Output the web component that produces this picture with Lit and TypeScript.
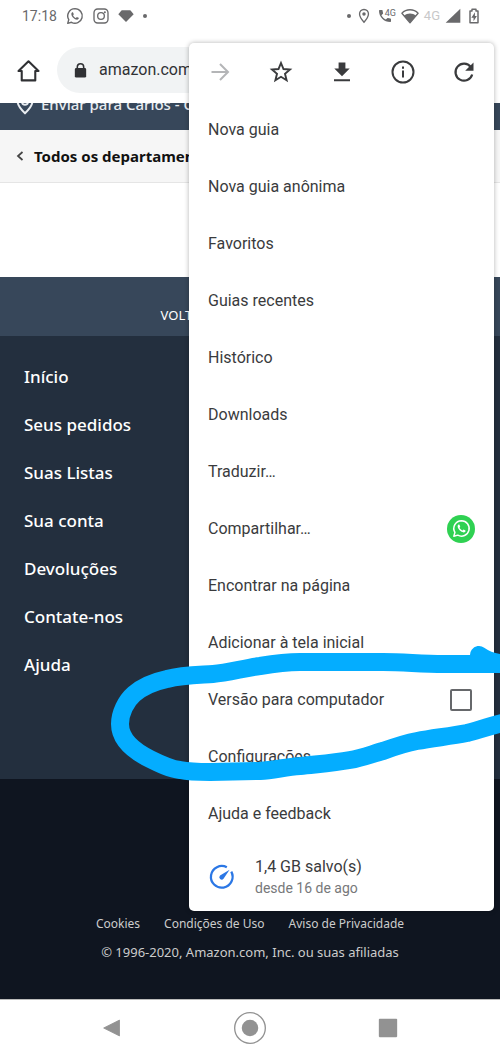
import { LitElement, html, css, svg } from "lit";
import { customElement, property } from "lit/decorators.js";

const bubble = svg`<path d="M12 2.2a9.7 9.7 0 0 0-8.3 14.7L2.3 21.8l5-1.4A9.7 9.7 0 1 0 12 2.2z" fill="none" stroke="currentColor" stroke-width="1.9" stroke-linejoin="round"/><path d="M8.6 6.9c-.4 0-1.5.8-1.5 2.4 0 3.300 4.300 7.600 7.600 7.600 1.500 0 2.400-1 2.500-2.100 0-.4-2.400-1.600-2.700-1.500-.4.100-.9 1.400-1.300 1.300-1.400-.4-3.200-2.100-3.700-3.400-.1-.4 1-1 .9-1.500-.1-.5-1-2.800-1.300-2.800z" fill="currentColor"/>`;

const icons = {
  whatsapp: bubble,
  instagram: svg`<g fill="none" stroke="currentColor" stroke-width="2"><rect x="1.500" y="1.500" width="21" height="21" rx="5.500"/><circle cx="12" cy="12" r="5"/></g><circle cx="17.800" cy="6.200" r="1.500" fill="currentColor"/>`,
  gem: svg`<path d="M5.500 3.500h13L23.500 9.500 12 21 .5 9.500z" fill="currentColor"/>`,
  place: svg`<path d="M12 2.200c-4 0-6.700 3-6.700 6.800 0 4.800 6.700 12.300 6.700 12.300S18.700 13.800 18.700 9c0-3.800-2.700-6.800-6.700-6.800z" fill="none" stroke="currentColor" stroke-width="2"/><circle cx="12" cy="9" r="2.600" fill="currentColor"/>`,
  call: svg`<path d="M6.600 10.800c1.400 2.800 3.800 5.100 6.600 6.600l2.200-2.200c.3-.3.700-.4 1-.2 1.100.4 2.300.6 3.600.6.600 0 1 .4 1 1V20c0 .6-.4 1-1 1C10.600 21 3 13.400 3 4c0-.6.400-1 1-1h3.500c.6 0 1 .4 1 1 0 1.300.2 2.500.6 3.600.1.300 0 .7-.2 1z" fill="currentColor"/>`,
  wifi: svg`<path d="M1.200 8.300C7 2.200 17 2.200 22.800 8.300L12 21z" fill="none" stroke="currentColor" stroke-width="1.800" stroke-linejoin="round"/><path d="M4 11.500c4.500-4 11.500-4 16 0L12 20.500z" fill="currentColor"/>`,
  signal: svg`<path d="M23 1v21H1z" fill="currentColor"/>`,
  battery: svg`<path d="M9 2h6v2.500h3V22H6V4.500h3z" fill="none" stroke="currentColor" stroke-width="2.200" stroke-linejoin="round"/><path d="M13.500 6.500 8 14.500h3.300V20l5-8h-3z" fill="currentColor"/>`,
  home: svg`<path d="M12 3.200 2.400 12.500H5.500v9h13v-9h3.100z" fill="none" stroke="currentColor" stroke-width="2" stroke-linejoin="round"/>`,
  lock: svg`<path d="M7.500 9V7a4.500 4.500 0 0 1 9 0v2" fill="none" stroke="currentColor" stroke-width="2.200"/><rect x="4" y="8.500" width="16" height="13.500" rx="2" fill="currentColor"/>`,
  pin: svg`<path d="M12 2C7.500 2 4 5.300 4 9.500 4 14.500 12 22 12 22s8-7.500 8-12.500C20 5.300 16.500 2 12 2z" fill="none" stroke="currentColor" stroke-width="2.200"/><circle cx="12" cy="9.500" r="3.300" fill="none" stroke="currentColor" stroke-width="2"/>`,
  chevron: svg`<path d="M17 4 8 12l9 8" fill="none" stroke="currentColor" stroke-width="3.500"/>`,
  forward: svg`<path d="M3.500 12h16M12 4l8 8-8 8" fill="none" stroke="currentColor" stroke-width="2"/>`,
  star: svg`<path d="m12 3 2.500 6 6.500.6-5 4.200 1.600 6.400L12 16.800l-5.600 3.400L8 13.800 3 9.600 9.500 9z" fill="none" stroke="currentColor" stroke-width="1.900"/>`,
  download: svg`<path d="M8.600 2.500h6.800v6h4.300L12 16.200 4.300 8.500h4.300zM4 19.300h16v2H4z" fill="currentColor"/>`,
  info: svg`<circle cx="12" cy="12" r="10.500" fill="none" stroke="currentColor" stroke-width="2"/><path d="M11 10.500h2V17.500h-2zM11 6.500h2v2.200h-2z" fill="currentColor"/>`,
  reload: svg`<path d="M18.800 7A8.500 8.500 0 1 0 20.200 14.500" fill="none" stroke="currentColor" stroke-width="2.200"/><path d="M21.500 2.500v8.300h-8.300z" fill="currentColor"/>`,
  saver: svg`<path d="M15.500 2.600A10 10 0 1 0 20 6.200" transform="rotate(6 12 12)" fill="none" stroke="currentColor" stroke-width="2.100"/><path d="M19 5.200 10.200 10.600a2.200 2.200 0 1 0 3.200 3.100z" fill="currentColor"/>`,
  back: svg`<path d="M21 2.500v19L2 12z" fill="currentColor" stroke="currentColor" stroke-linejoin="round"/>`,
  circle: svg`<circle cx="12" cy="12" r="11.500" fill="none" stroke="currentColor" stroke-width="1"/><circle cx="12" cy="12" r="6.200" fill="currentColor"/>`,
  square: svg`<rect x="1" y="1" width="22" height="22" rx="1" fill="currentColor"/>`,
};

@customElement("ui-icon")
class UiIcon extends LitElement {
  @property() name: keyof typeof icons = "home";

  static styles = css`
    :host { display: inline-flex; flex: none; width: 24px; height: 24px; }
    .glyph { width: 100%; height: 100%; overflow: visible; }
  `;

  render() {
    return html`<svg class="glyph" viewBox="0 0 24 24" aria-hidden="true">${icons[this.name]}</svg>`;
  }
}

@customElement("browser-menu")
class BrowserMenu extends LitElement {
  static styles = css`
    :host {
      display: block;
      font-family: Roboto, sans-serif;
      color: #3a3b3d;
      background: #fff;
      border-radius: 5px;
      box-shadow: 0 0 5px rgba(0, 0, 0, 0.3);
    }
    button { font: inherit; color: inherit; background: none; border: 0; padding: 0; text-align: left; }
    .actions { display: grid; grid-template-columns: repeat(5, 1fr); height: 58px; }
    .action { display: flex; align-items: center; justify-content: center; }
    .action:disabled { color: #b4b5b7; }
    .list { list-style: none; margin: 0; padding: 0; }
    .row {
      display: flex; align-items: center; justify-content: space-between;
      box-sizing: border-box; width: 100%; height: 57px; padding: 0 19px;
      font-size: 16px; line-height: 20px;
    }
    .share {
      display: flex; align-items: center; justify-content: center;
      width: 28px; height: 28px; border-radius: 50%; background: #2fd152; color: #fff;
    }
    .share ui-icon { width: 19px; height: 19px; }
    .box {
      appearance: none; box-sizing: border-box; width: 22px; height: 22px; margin: 0 3px;
      border: 2px solid #66686b; border-radius: 2px;
    }
    .saved { display: flex; align-items: center; gap: 20px; width: 100%; height: 69px; padding: 0 20px; }
    .saved ui-icon { width: 26px; height: 26px; color: #2b77e5; }
    .texts { display: flex; flex-direction: column; }
    .amount { font-size: 16px; line-height: 22px; }
    .since { font-size: 14px; line-height: 20px; color: #77787a; }
  `;

  private action(name: string, label: string, off = false) {
    return html`<button class="action" aria-label=${label} ?disabled=${off}><ui-icon name=${name}></ui-icon></button>`;
  }

  private item(label: string) {
    if (label === "Versão para computador") {
      return html`<li><label class="row">${label}<input class="box" type="checkbox" /></label></li>`;
    }
    return html`<li><button class="row"><span>${label}</span>${label === "Compartilhar…"
      ? html`<span class="share"><ui-icon name="whatsapp"></ui-icon></span>` : ""}</button></li>`;
  }

  render() {
    const labels = ["Nova guia", "Nova guia anônima", "Favoritos", "Guias recentes", "Histórico", "Downloads",
      "Traduzir…", "Compartilhar…", "Encontrar na página", "Adicionar à tela inicial",
      "Versão para computador", "Configurações", "Ajuda e feedback"];
    return html`
      <div class="actions">
        ${this.action("forward", "Avançar", true)}
        ${this.action("star", "Adicionar aos favoritos")}
        ${this.action("download", "Baixar")}
        ${this.action("info", "Informações")}
        ${this.action("reload", "Recarregar")}
      </div>
      <ul class="list">${labels.map((l) => this.item(l))}</ul>
      <button class="saved">
        <ui-icon name="saver"></ui-icon>
        <span class="texts"><span class="amount">1,4 GB salvo(s)</span><span class="since">desde 16 de ago</span></span>
      </button>
    `;
  }
}

@customElement("app-root")
class AppRoot extends LitElement {
  static styles = css`
    :host {
      display: block; position: relative; overflow: hidden; background: #fff;
      font-family: "Noto Sans", sans-serif; white-space: nowrap;
    }
    a { color: inherit; text-decoration: none; }
    button { font: inherit; color: inherit; background: none; border: 0; padding: 0; }
    .status {
      display: flex; align-items: center; justify-content: space-between;
      box-sizing: border-box; height: 32px; padding: 0 18px 0 22px;
      font: 14px/20px Roboto, sans-serif; color: #69696b;
    }
    .group { display: flex; align-items: center; gap: 9px; }
    .right { gap: 5px; }
    .dot { width: 4px; height: 4px; border-radius: 50%; background: currentColor; }
    .status ui-icon { width: 16px; height: 16px; }
    .status .app { width: 18px; height: 18px; }
    .voice { display: flex; align-items: flex-start; font-size: 9px; line-height: 10px; }
    .voice span { margin-left: -8px; }
    .faint { font-size: 13px; line-height: 26px; color: #c8c8c9; align-self: flex-start; }
    .toolbar {
      display: flex; align-items: center; gap: 16px;
      box-sizing: border-box; height: 71px; padding: 5px 16px 0; color: #303134;
    }
    .toolbar .home { display: flex; }
    .home ui-icon { width: 25px; height: 25px; }
    .address {
      display: flex; align-items: center; gap: 10px; flex: 1; min-width: 0;
      height: 46px; padding: 0 15px; border-radius: 23px; background: #f1f3f4;
    }
    .address ui-icon { width: 17px; height: 17px; }
    .url {
      flex: 1; min-width: 0; border: 0; padding: 0; background: none;
      font: 16px/20px Roboto, sans-serif; color: #303134;
    }
    .page { overflow: hidden; }
    .deliver {
      display: flex; align-items: center; gap: 5px; height: 52px; margin-top: -25px;
      padding: 0 14px; background: #37475a; color: #e8ecf0; font-size: 15px; font-weight: 500;
    }
    .deliver ui-icon { width: 22px; height: 22px; }
    .dept {
      display: flex; align-items: center; gap: 8px; box-sizing: border-box; height: 53px;
      padding: 0 14px; background: #f6f6f6; border-bottom: 1px solid #e5e5e5;
      font-size: 15px; font-weight: 700; color: #111;
    }
    .dept ui-icon { width: 12px; height: 12px; color: #444; }
    .blank { height: 94px; }
    .top {
      display: block; box-sizing: border-box; width: 100%; height: 59px; padding-top: 16px;
      background: #37475a; color: #fff; font-size: 13px; text-align: center;
    }
    .links {
      display: flex; flex-direction: column; gap: 24px; box-sizing: border-box;
      padding: 29px 24px 102px; background: #232f3e; color: #fff;
      font-size: 17px; line-height: 24px; font-weight: 500;
    }
    .links a { align-self: flex-start; }
    .footer {
      display: flex; flex-direction: column; align-items: center; gap: 8px; box-sizing: border-box;
      padding: 135px 0 37px; background: #0f1520; color: #ccc; font-size: 13px; line-height: 20px;
    }
    .legal { display: flex; gap: 24px; font-size: 12px; }
    .footer p { margin: 0; }
    .system {
      display: grid; grid-template-columns: 84px 84px 84px; justify-content: center; column-gap: 54px;
      box-sizing: border-box; height: 57px; border-top: 1px solid #bbb; color: #929292;
    }
    .system button { display: flex; align-items: center; justify-content: center; }
    .system ui-icon { width: 20px; height: 20px; }
    .system .round { width: 32px; height: 32px; }
    .menu { position: absolute; top: 43px; right: 6px; width: 305px; }
    .ink { position: absolute; right: 0; top: 640px; width: 400px; height: 150px; pointer-events: none; }
  `;

  render() {
    const links = ["Início", "Seus pedidos", "Suas Listas", "Sua conta", "Devoluções", "Contate-nos", "Ajuda"];
    return html`
      <div class="status">
        <div class="group">
          <span>17:18</span>
          <ui-icon class="app" name="whatsapp"></ui-icon>
          <ui-icon name="instagram"></ui-icon>
          <ui-icon name="gem"></ui-icon>
          <span class="dot"></span>
        </div>
        <div class="group right">
          <span class="dot"></span>
          <ui-icon name="place"></ui-icon>
          <span class="voice"><ui-icon name="call"></ui-icon><span>4G</span></span>
          <ui-icon class="app" name="wifi"></ui-icon>
          <span class="faint">4G</span>
          <ui-icon name="signal"></ui-icon>
          <ui-icon name="battery"></ui-icon>
        </div>
      </div>
      <header class="toolbar">
        <button class="home" aria-label="Página inicial"><ui-icon name="home"></ui-icon></button>
        <div class="address">
          <ui-icon name="lock"></ui-icon>
          <input class="url" aria-label="Endereço" value="amazon.com.br" />
        </div>
      </header>
      <main class="page">
        <div class="deliver"><ui-icon name="pin"></ui-icon><span>Enviar para Carlos - C</span></div>
        <a class="dept" href="#"><ui-icon name="chevron"></ui-icon>Todos os departamentos</a>
        <div class="blank"></div>
        <button class="top">VOLTAR AO TOPO DA PÁGINA</button>
        <nav class="links">${links.map((l) => html`<a href="#">${l}</a>`)}</nav>
        <footer class="footer">
          <div class="legal"><a href="#">Cookies</a><a href="#">Condições de Uso</a><a href="#">Aviso de Privacidade</a></div>
          <p>© 1996-2020, Amazon.com, Inc. ou suas afiliadas</p>
        </footer>
      </main>
      <div class="system">
        <button aria-label="Voltar"><ui-icon name="back"></ui-icon></button>
        <button aria-label="Início"><ui-icon class="round" name="circle"></ui-icon></button>
        <button aria-label="Recentes"><ui-icon name="square"></ui-icon></button>
      </div>
      <browser-menu class="menu"></browser-menu>
      <svg class="ink" viewBox="100 640 400 150" aria-hidden="true">
        <path d="M479 655C486 660 494 663 506 664L444 664C420 664 405 662 383 662L300 662C285 662 272 664 260 666C244 668 228 673 213 674C197 675 182 675 167 679C153 682 141 688 134 694C126 701 120 713 120 724C120 738 132 750 150 759C160 764 170 769 180 770C190 772 200 772 210 772L260 771C274 770 286 767 300 766C318 764 334 763 350 760C362 758 372 754 383 751C394 747 406 743 417 741C434 738 451 736 467 733C478 730 490 726 506 722"
          fill="none" stroke="#04adff" stroke-width="18" stroke-linecap="round" stroke-linejoin="round"/>
      </svg>
    `;
  }
}
